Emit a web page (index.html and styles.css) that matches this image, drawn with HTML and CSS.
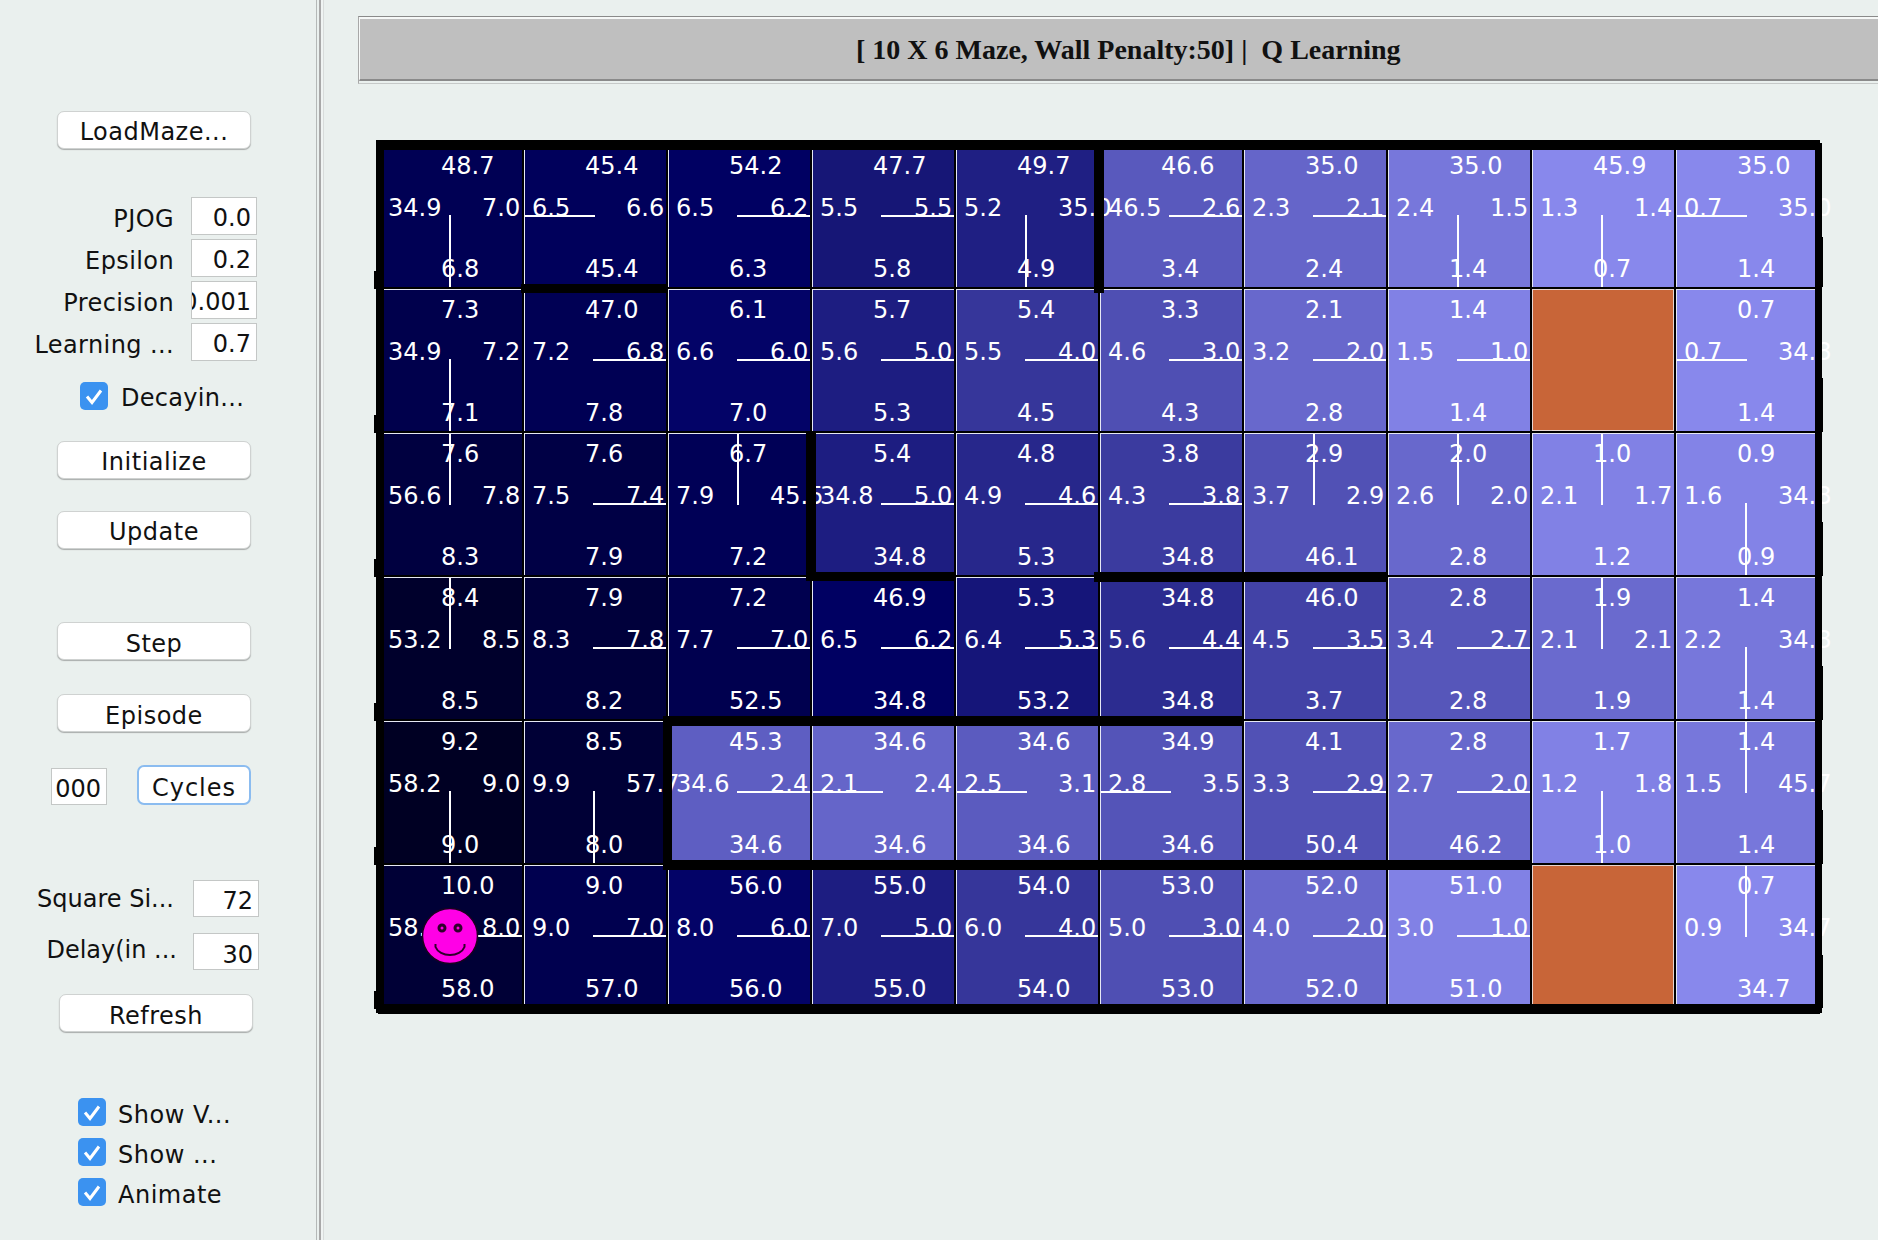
FILE: index.html
```html
<!DOCTYPE html>
<html lang="en">
<head>
<meta charset="utf-8">
<title>Maze Q Learning</title>
<link rel="stylesheet" href="styles.css">
</head>
<body>
<aside class="sidebar">
  <button class="btn btn-load">LoadMaze...</button>
  <div class="params">
    <div class="param"><span class="label">PJOG</span><span class="field">0.0</span></div>
    <div class="param"><span class="label">Epsilon</span><span class="field">0.2</span></div>
    <div class="param"><span class="label">Precision</span><span class="field">0.001</span></div>
    <div class="param"><span class="label">Learning ...</span><span class="field">0.7</span></div>
  </div>
  <label class="check check-decay"><svg class="box" viewBox="0 0 28 28"><rect width="28" height="28" rx="5" fill="#3b92f0"/><path d="M7 14.5l5 6 9-12" fill="none" stroke="#fff" stroke-width="3"/></svg><span class="check-text">Decayin...</span></label>
  <button class="btn btn-init">Initialize</button>
  <button class="btn btn-update">Update</button>
  <button class="btn btn-step">Step</button>
  <button class="btn btn-episode">Episode</button>
  <div class="cycles"><span class="field field-cycles">000</span><button class="btn btn-cycles">Cycles</button></div>
  <div class="param param-square"><span class="label">Square Si...</span><span class="field">72</span></div>
  <div class="param param-delay"><span class="label">Delay(in ...</span><span class="field">30</span></div>
  <button class="btn btn-refresh">Refresh</button>
  <div class="checks">
    <label class="check"><svg class="box" viewBox="0 0 28 28"><rect width="28" height="28" rx="5" fill="#3b92f0"/><path d="M7 14.5l5 6 9-12" fill="none" stroke="#fff" stroke-width="3"/></svg><span class="check-text">Show V...</span></label>
    <label class="check"><svg class="box" viewBox="0 0 28 28"><rect width="28" height="28" rx="5" fill="#3b92f0"/><path d="M7 14.5l5 6 9-12" fill="none" stroke="#fff" stroke-width="3"/></svg><span class="check-text">Show ...</span></label>
    <label class="check"><svg class="box" viewBox="0 0 28 28"><rect width="28" height="28" rx="5" fill="#3b92f0"/><path d="M7 14.5l5 6 9-12" fill="none" stroke="#fff" stroke-width="3"/></svg><span class="check-text">Animate</span></label>
  </div>
</aside>
<div class="divider"></div>
<main class="main">
  <header class="header"><h1 class="title">[ 10 X 6 Maze, Wall Penalty:50] |&nbsp; Q Learning</h1></header>
  <div class="maze">
    <div class="cell down" style="background-color:rgb(0,0,84)"><span class="t">48.7</span><span class="l">34.9</span><span class="r">7.0</span><span class="b">6.8</span></div>
    <div class="cell left" style="background-color:rgb(0,0,91)"><span class="t">45.4</span><span class="l">6.5</span><span class="r">6.6</span><span class="b">45.4</span></div>
    <div class="cell right" style="background-color:rgb(0,0,98)"><span class="t">54.2</span><span class="l">6.5</span><span class="r">6.2</span><span class="b">6.3</span></div>
    <div class="cell right" style="background-color:rgb(22,22,118)"><span class="t">47.7</span><span class="l">5.5</span><span class="r">5.5</span><span class="b">5.8</span></div>
    <div class="cell down" style="background-color:rgb(31,31,131)"><span class="t">49.7</span><span class="l">5.2</span><span class="r">35.0</span><span class="b">4.9</span></div>
    <div class="cell right" style="background-color:rgb(89,89,189)"><span class="t">46.6</span><span class="l">46.5</span><span class="r">2.6</span><span class="b">3.4</span></div>
    <div class="cell right" style="background-color:rgb(101,101,201)"><span class="t">35.0</span><span class="l">2.3</span><span class="r">2.1</span><span class="b">2.4</span></div>
    <div class="cell down" style="background-color:rgb(119,119,219)"><span class="t">35.0</span><span class="l">2.4</span><span class="r">1.5</span><span class="b">1.4</span></div>
    <div class="cell down" style="background-color:rgb(136,136,236)"><span class="t">45.9</span><span class="l">1.3</span><span class="r">1.4</span><span class="b">0.7</span></div>
    <div class="cell left" style="background-color:rgb(136,136,236)"><span class="t">35.0</span><span class="l">0.7</span><span class="r">35.0</span><span class="b">1.4</span></div>

    <div class="cell down" style="background-color:rgb(0,0,76)"><span class="t">7.3</span><span class="l">34.9</span><span class="r">7.2</span><span class="b">7.1</span></div>
    <div class="cell right" style="background-color:rgb(0,0,84)"><span class="t">47.0</span><span class="l">7.2</span><span class="r">6.8</span><span class="b">7.8</span></div>
    <div class="cell right" style="background-color:rgb(3,3,103)"><span class="t">6.1</span><span class="l">6.6</span><span class="r">6.0</span><span class="b">7.0</span></div>
    <div class="cell right" style="background-color:rgb(29,29,129)"><span class="t">5.7</span><span class="l">5.6</span><span class="r">5.0</span><span class="b">5.3</span></div>
    <div class="cell right" style="background-color:rgb(54,54,154)"><span class="t">5.4</span><span class="l">5.5</span><span class="r">4.0</span><span class="b">4.5</span></div>
    <div class="cell right" style="background-color:rgb(79,79,179)"><span class="t">3.3</span><span class="l">4.6</span><span class="r">3.0</span><span class="b">4.3</span></div>
    <div class="cell right" style="background-color:rgb(104,104,204)"><span class="t">2.1</span><span class="l">3.2</span><span class="r">2.0</span><span class="b">2.8</span></div>
    <div class="cell right" style="background-color:rgb(129,129,229)"><span class="t">1.4</span><span class="l">1.5</span><span class="r">1.0</span><span class="b">1.4</span></div>
    <div class="cell goal"></div>
    <div class="cell left" style="background-color:rgb(136,136,236)"><span class="t">0.7</span><span class="l">0.7</span><span class="r">34.8</span><span class="b">1.4</span></div>

    <div class="cell up" style="background-color:rgb(0,0,64)"><span class="t">7.6</span><span class="l">56.6</span><span class="r">7.8</span><span class="b">8.3</span></div>
    <div class="cell right" style="background-color:rgb(0,0,69)"><span class="t">7.6</span><span class="l">7.5</span><span class="r">7.4</span><span class="b">7.9</span></div>
    <div class="cell up" style="background-color:rgb(0,0,86)"><span class="t">6.7</span><span class="l">7.9</span><span class="r">45.5</span><span class="b">7.2</span></div>
    <div class="cell right" style="background-color:rgb(29,29,129)"><span class="t">5.4</span><span class="l">34.8</span><span class="r">5.0</span><span class="b">34.8</span></div>
    <div class="cell right" style="background-color:rgb(39,39,139)"><span class="t">4.8</span><span class="l">4.9</span><span class="r">4.6</span><span class="b">5.3</span></div>
    <div class="cell right" style="background-color:rgb(59,59,159)"><span class="t">3.8</span><span class="l">4.3</span><span class="r">3.8</span><span class="b">34.8</span></div>
    <div class="cell up" style="background-color:rgb(81,81,181)"><span class="t">2.9</span><span class="l">3.7</span><span class="r">2.9</span><span class="b">46.1</span></div>
    <div class="cell up" style="background-color:rgb(104,104,204)"><span class="t">2.0</span><span class="l">2.6</span><span class="r">2.0</span><span class="b">2.8</span></div>
    <div class="cell up" style="background-color:rgb(129,129,229)"><span class="t">1.0</span><span class="l">2.1</span><span class="r">1.7</span><span class="b">1.2</span></div>
    <div class="cell down" style="background-color:rgb(131,131,231)"><span class="t">0.9</span><span class="l">1.6</span><span class="r">34.8</span><span class="b">0.9</span></div>

    <div class="cell up" style="background-color:rgb(0,0,44)"><span class="t">8.4</span><span class="l">53.2</span><span class="r">8.5</span><span class="b">8.5</span></div>
    <div class="cell right" style="background-color:rgb(0,0,59)"><span class="t">7.9</span><span class="l">8.3</span><span class="r">7.8</span><span class="b">8.2</span></div>
    <div class="cell right" style="background-color:rgb(0,0,79)"><span class="t">7.2</span><span class="l">7.7</span><span class="r">7.0</span><span class="b">52.5</span></div>
    <div class="cell right" style="background-color:rgb(0,0,98)"><span class="t">46.9</span><span class="l">6.5</span><span class="r">6.2</span><span class="b">34.8</span></div>
    <div class="cell right" style="background-color:rgb(21,21,121)"><span class="t">5.3</span><span class="l">6.4</span><span class="r">5.3</span><span class="b">53.2</span></div>
    <div class="cell right" style="background-color:rgb(44,44,144)"><span class="t">34.8</span><span class="l">5.6</span><span class="r">4.4</span><span class="b">34.8</span></div>
    <div class="cell right" style="background-color:rgb(66,66,166)"><span class="t">46.0</span><span class="l">4.5</span><span class="r">3.5</span><span class="b">3.7</span></div>
    <div class="cell right" style="background-color:rgb(86,86,186)"><span class="t">2.8</span><span class="l">3.4</span><span class="r">2.7</span><span class="b">2.8</span></div>
    <div class="cell up" style="background-color:rgb(106,106,206)"><span class="t">1.9</span><span class="l">2.1</span><span class="r">2.1</span><span class="b">1.9</span></div>
    <div class="cell down" style="background-color:rgb(119,119,219)"><span class="t">1.4</span><span class="l">2.2</span><span class="r">34.8</span><span class="b">1.4</span></div>

    <div class="cell down" style="background-color:rgb(0,0,35)"><span class="t">9.2</span><span class="l">58.2</span><span class="r">9.0</span><span class="b">9.0</span></div>
    <div class="cell down" style="background-color:rgb(0,0,54)"><span class="t">8.5</span><span class="l">9.9</span><span class="r">57.7</span><span class="b">8.0</span></div>
    <div class="cell right" style="background-color:rgb(94,94,194)"><span class="t">45.3</span><span class="l">34.6</span><span class="r">2.4</span><span class="b">34.6</span></div>
    <div class="cell left" style="background-color:rgb(101,101,201)"><span class="t">34.6</span><span class="l">2.1</span><span class="r">2.4</span><span class="b">34.6</span></div>
    <div class="cell left" style="background-color:rgb(91,91,191)"><span class="t">34.6</span><span class="l">2.5</span><span class="r">3.1</span><span class="b">34.6</span></div>
    <div class="cell left" style="background-color:rgb(84,84,184)"><span class="t">34.9</span><span class="l">2.8</span><span class="r">3.5</span><span class="b">34.6</span></div>
    <div class="cell right" style="background-color:rgb(81,81,181)"><span class="t">4.1</span><span class="l">3.3</span><span class="r">2.9</span><span class="b">50.4</span></div>
    <div class="cell right" style="background-color:rgb(104,104,204)"><span class="t">2.8</span><span class="l">2.7</span><span class="r">2.0</span><span class="b">46.2</span></div>
    <div class="cell down" style="background-color:rgb(129,129,229)"><span class="t">1.7</span><span class="l">1.2</span><span class="r">1.8</span><span class="b">1.0</span></div>
    <div class="cell up" style="background-color:rgb(119,119,219)"><span class="t">1.4</span><span class="l">1.5</span><span class="r">45.7</span><span class="b">1.4</span></div>

    <div class="cell right" style="background-color:rgb(0,0,54)"><span class="t">10.0</span><span class="l">58.0</span><span class="r">8.0</span><span class="b">58.0</span></div>
    <div class="cell right" style="background-color:rgb(0,0,79)"><span class="t">9.0</span><span class="l">9.0</span><span class="r">7.0</span><span class="b">57.0</span></div>
    <div class="cell right" style="background-color:rgb(3,3,103)"><span class="t">56.0</span><span class="l">8.0</span><span class="r">6.0</span><span class="b">56.0</span></div>
    <div class="cell right" style="background-color:rgb(29,29,129)"><span class="t">55.0</span><span class="l">7.0</span><span class="r">5.0</span><span class="b">55.0</span></div>
    <div class="cell right" style="background-color:rgb(54,54,154)"><span class="t">54.0</span><span class="l">6.0</span><span class="r">4.0</span><span class="b">54.0</span></div>
    <div class="cell right" style="background-color:rgb(79,79,179)"><span class="t">53.0</span><span class="l">5.0</span><span class="r">3.0</span><span class="b">53.0</span></div>
    <div class="cell right" style="background-color:rgb(104,104,204)"><span class="t">52.0</span><span class="l">4.0</span><span class="r">2.0</span><span class="b">52.0</span></div>
    <div class="cell right" style="background-color:rgb(129,129,229)"><span class="t">51.0</span><span class="l">3.0</span><span class="r">1.0</span><span class="b">51.0</span></div>
    <div class="cell goal"></div>
    <div class="cell up" style="background-color:rgb(136,136,236)"><span class="t">0.7</span><span class="l">0.9</span><span class="r">34.7</span><span class="b">34.7</span></div>

    <svg class="walls" viewBox="378 143 1440 864" width="1440" height="864" shape-rendering="crispEdges">
      <g fill="#000">
        <rect x="376" y="140" width="1444" height="10"/>
        <rect x="376" y="140" width="8" height="873"/>
        <rect x="374" y="271" width="8" height="18"/>
        <rect x="374" y="415" width="8" height="18"/>
        <rect x="374" y="559" width="8" height="18"/>
        <rect x="374" y="703" width="8" height="18"/>
        <rect x="374" y="847" width="8" height="18"/>
        <rect x="374" y="991" width="8" height="18"/>
        <rect x="1815" y="143" width="7" height="870"/>
        <rect x="1816" y="237" width="7" height="50"/>
        <rect x="1816" y="378" width="7" height="54"/>
        <rect x="1816" y="522" width="7" height="54"/>
        <rect x="1816" y="666" width="7" height="54"/>
        <rect x="1816" y="810" width="7" height="54"/>
        <rect x="1816" y="955" width="7" height="53"/>
        <rect x="378" y="1004" width="1442" height="10"/>
        <rect x="521" y="284" width="146" height="9"/>
        <rect x="1094" y="140" width="10" height="153"/>
        <rect x="806" y="432" width="10" height="149"/>
        <rect x="806" y="572" width="150" height="9"/>
        <rect x="1094" y="572" width="294" height="10"/>
        <rect x="663" y="716" width="580" height="10"/>
        <rect x="663" y="716" width="9" height="153"/>
        <rect x="663" y="860" width="869" height="10"/>
      </g>
    </svg>
    <svg class="agent" viewBox="0 0 56 56" width="56" height="56">
      <circle cx="28" cy="28" r="27.5" fill="#ff00e6" stroke="#1a0020" stroke-width="1.5"/>
      <circle cx="20" cy="20" r="3" fill="#ff00e6" stroke="#30002c" stroke-width="3"/>
      <circle cx="36" cy="20" r="3" fill="#ff00e6" stroke="#30002c" stroke-width="3"/>
      <path d="M13.5 36v3c2 5 8 8 14.5 8s12.5-3 14.5-8v-3" fill="none" stroke="#30002c" stroke-width="2"/>
    </svg>
  </div>
</main>
</body>
</html>
```
FILE: styles.css
```css
* { box-sizing: border-box; }

html, body {
  margin: 0;
  width: 1878px;
  height: 1240px;
  overflow: hidden;
}

body {
  display: flex;
  background: #eaf0ee;
  color: #111;
  font-family: "DejaVu Sans", sans-serif;
  font-size: 24px;
}

/* Sidebar */
.sidebar {
  flex: 0 0 317px;
  height: 1240px;
  border-right: 1px solid #b4b8b7;
  padding-top: 111px;
}

.btn {
  display: block;
  width: 194px;
  height: 38px;
  padding: 4px 0 0;
  border: 1px solid #cfd2d1;
  border-radius: 7px;
  background: #fff;
  box-shadow: 0 1px 1px #a9acab;
  color: #111;
  font: inherit;
  letter-spacing: 0.5px;
  text-align: center;
}

.btn-load, .btn-init, .btn-update, .btn-step, .btn-episode { margin-left: 57px; }
.btn-init { margin-top: 31px; }
.btn-update { margin-top: 32px; }
.btn-step { margin-top: 73px; }
.btn-episode { margin-top: 34px; }
.btn-refresh { margin: 24px 0 0 59px; }
.btn-step, .btn-episode, .btn-cycles, .btn-refresh { padding-top: 6px; }

.btn-cycles {
  width: 114px;
  height: 40px;
  margin-left: 30px;
  border: 2px solid #8bbcf0;
  box-shadow: none;
  letter-spacing: 1px;
}

.params {
  display: flex;
  flex-direction: column;
  gap: 4px;
  margin-top: 48px;
}

.param {
  display: grid;
  grid-template-columns: 174px 66px;
  column-gap: 17px;
  height: 38px;
  align-items: center;
}

.label {
  padding-top: 5px;
  letter-spacing: 0.4px;
  text-align: right;
  white-space: nowrap;
}

.field {
  display: flex;
  justify-content: flex-end;
  align-items: center;
  height: 100%;
  padding: 3px 5px 0 0;
  overflow: hidden;
  border: 1px solid #c4c7c6;
  background: #fff;
  white-space: nowrap;
}

.check {
  display: flex;
  align-items: center;
  gap: 12px;
  height: 28px;
  padding: 0 0 0 78px;
  letter-spacing: 0.5px;
}

.check-text { padding-top: 5px; }

.box {
  flex: 0 0 28px;
  width: 28px;
  height: 28px;
}

.check-decay {
  margin: 21px 0 0;
  padding-left: 80px;
  gap: 13px;
  letter-spacing: 0.3px;
}

.check-decay .check-text { padding-top: 3px; }

.cycles {
  display: flex;
  align-items: flex-end;
  margin: 33px 0 0 51px;
}

.field-cycles {
  flex: 0 0 56px;
  height: 37px;
  padding: 5px 5px 0 0;
}

.param-square, .param-delay {
  height: 37px;
  column-gap: 19px;
}

.param-square { margin-top: 75px; }
.param-delay { margin-top: 16px; }
.param-square .label { padding-top: 0; letter-spacing: 0; }
.param-delay .label { padding: 0; margin: -3px -3px 0 0; letter-spacing: 0; }
.param-square .field { padding-top: 5px; }
.param-delay .field { padding-top: 6px; }

.checks {
  display: flex;
  flex-direction: column;
  gap: 12px;
  margin-top: 66px;
}

.divider {
  flex: 0 0 5px;
  height: 1240px;
  margin-left: 2px;
  border-left: 2px solid #a8a8a8;
  border-right: 1px solid #d8dcdb;
  background: #f0f4f3;
}

/* Main */
.main {
  flex: 1;
  min-width: 0;
  padding-top: 16px;
}

.header {
  margin: 0 -40px 0 34px;
  padding-bottom: 2px;
  border-top: 1px solid #8a8a8a;
  border-left: 1px solid #a8a8a8;
  border-bottom: 1px solid #c6c9c8;
}

.title {
  height: 64px;
  margin: 0;
  padding-left: 496px;
  border-top: 2px solid #f6f8f7;
  border-left: 1px solid #f6f8f7;
  border-bottom: 2px solid #8a8a8a;
  background: #bfbfbf;
  color: #111;
  font-family: "Liberation Serif", serif;
  font-size: 28px;
  font-weight: 700;
  line-height: 62px;
  white-space: nowrap;
}

/* Maze */
.maze {
  position: relative;
  display: grid;
  grid-template-columns: repeat(10, 144px);
  grid-template-rows: repeat(6, 144px);
  width: 1440px;
  margin: 59px 0 0 54px;
  color: #fff;
}

.cell {
  display: grid;
  grid-template-columns: 53px 41px 40px;
  grid-template-rows: 42px 61px 30px;
  padding: 11px 0 0 10px;
  line-height: 24px;
  white-space: nowrap;
  box-shadow: inset 2px 2px 0 #000, inset 3px 3px 0 #e6e8f4;
  background-repeat: no-repeat;
  background-image: linear-gradient(#fff, #fff);
}

/* Numbers run over the neighbouring squares, so they sit above every square. */
.cell span {
  position: relative;
  z-index: 1;
  min-width: 0;
}

.t { grid-column: 2 / 4; grid-row: 1; }
.l { grid-column: 1; grid-row: 2; }
.r { grid-column: 3; grid-row: 2; }
.b { grid-column: 2 / 4; grid-row: 3; }

.down  { background-size: 2px 72px; background-position: 71px 72px; }
.up    { background-size: 2px 74px; background-position: 71px 0; }
.left  { background-size: 73px 2px; background-position: 0 72px; }
.right { background-size: 73px 2px; background-position: 71px 72px; }

.goal {
  background-color: #c86538;
  background-image: none;
  box-shadow: inset 2px 2px 0 #000, inset 3px 3px 0 #e6d5d0, inset -1px -1px 0 #e6d5d0;
}

.walls {
  position: absolute;
  top: 0;
  left: 0;
  z-index: 2;
  overflow: visible;
}

.agent {
  position: absolute;
  left: 44px;
  top: 765px;
  z-index: 3;
  overflow: visible;
}
```
